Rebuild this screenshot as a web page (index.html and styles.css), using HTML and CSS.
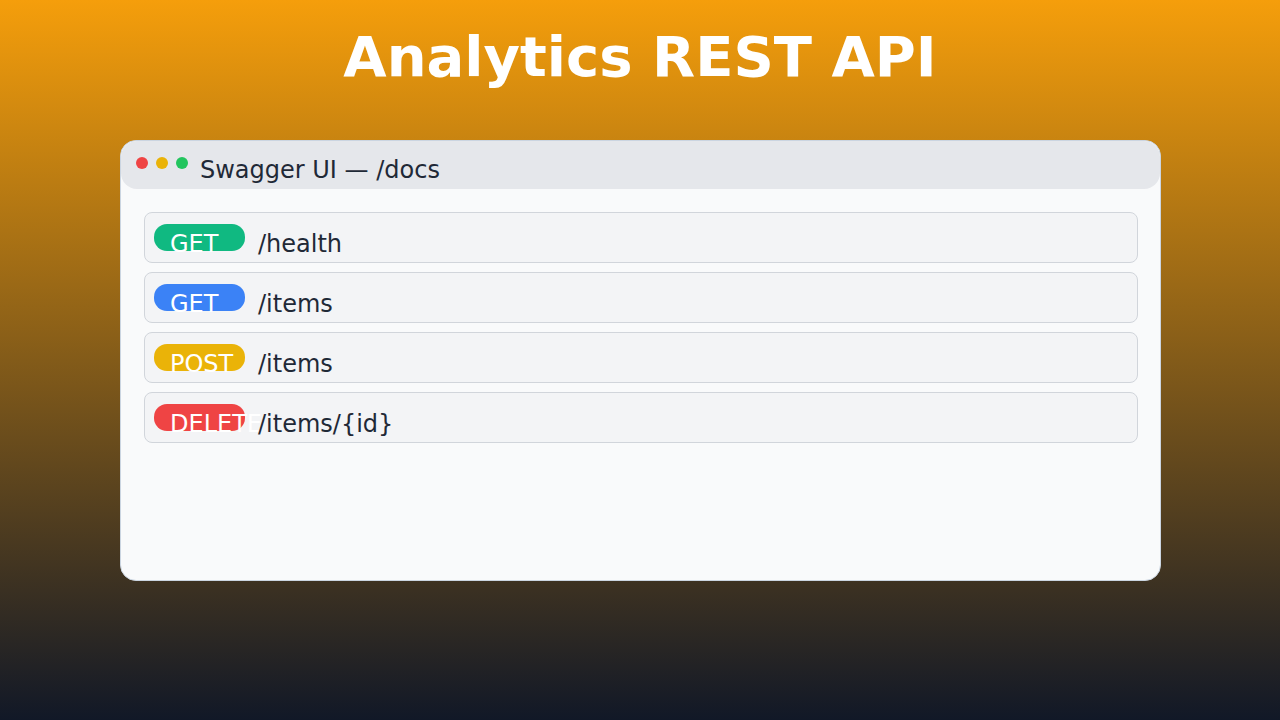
FILE: index.html
```html
<!DOCTYPE html>
<html>
<head>
    <meta name="viewport" content="width=device-width, initial-scale=1.0">
    <link rel="stylesheet" href="styles.css">
</head>
<body>
    <h1 class="title">Analytics REST API</h1>

    <div class="window">
        <div class="titlebar">
            <div class="dots">
                <span class="dot red"></span>
                <span class="dot yellow"></span>
                <span class="dot green"></span>
            </div>
            <div class="wintitle">Swagger UI — /docs</div>
        </div>

        <div class="content">
            <div class="route">
                <span class="badge get">GET</span>
                <span class="path">/health</span>
            </div>
            <div class="route">
                <span class="badge list">GET</span>
                <span class="path">/items</span>
            </div>
            <div class="route">
                <span class="badge post">POST</span>
                <span class="path">/items</span>
            </div>
            <div class="route">
                <span class="badge del">DELETE</span>
                <span class="path">/items/{id}</span>
            </div>
        </div>
    </div>
</body>
</html>
```

FILE: styles.css
```css
html, body {
    height: 100%;
}

body {
    margin: 0;
    font-family: "DejaVu Sans", sans-serif;
    background: linear-gradient(180deg, #f59e0b 0%, #111827 100%);
    overflow: hidden;
}

.title {
    margin: 0;
    padding-top: 29px;
    font-size: 56px;
    line-height: 56px;
    font-weight: bold;
    color: #ffffff;
    text-align: center;
}

.window {
    box-sizing: border-box;
    width: 1041px;
    height: 441px;
    margin: 55px 0 0 120px;
    background: #f9fafb;
    border: 1px solid #cbd5e1;
    border-radius: 16px;
    overflow: hidden;
}

.titlebar {
    box-sizing: border-box;
    height: 48px;
    display: flex;
    align-items: flex-start;
    padding: 15px 0 0 15px;
    background: #e5e7eb;
    border-radius: 16px;
}

.dots {
    display: flex;
    gap: 8px;
    margin-top: 1px;
    margin-right: 12px;
}

.dot {
    width: 12px;
    height: 12px;
    border-radius: 50%;
}

.red { background: #ef4444; }
.yellow { background: #eab308; }
.green { background: #22c55e; }

.wintitle {
    font-size: 24px;
    line-height: 28px;
    color: #1f2937;
}

.content {
    display: flex;
    flex-direction: column;
    gap: 9px;
    padding: 23px 22px 0 23px;
}

.route {
    box-sizing: border-box;
    height: 51px;
    display: flex;
    align-items: flex-start;
    padding: 11px 9px;
    background: #f3f4f6;
    border: 1px solid #d1d5db;
    border-radius: 8px;
}

.badge {
    box-sizing: border-box;
    flex: none;
    width: 91px;
    height: 27px;
    padding: 6px 0 0 16px;
    border-radius: 13px;
    font-size: 24px;
    line-height: 28px;
    color: #ffffff;
    white-space: nowrap;
}

.get { background: #10b981; }
.list { background: #3b82f6; }
.post { background: #eab308; }
.del { background: #ef4444; }

.path {
    margin: 6px 0 0 13px;
    font-size: 24px;
    line-height: 28px;
    color: #1f2937;
}
```
